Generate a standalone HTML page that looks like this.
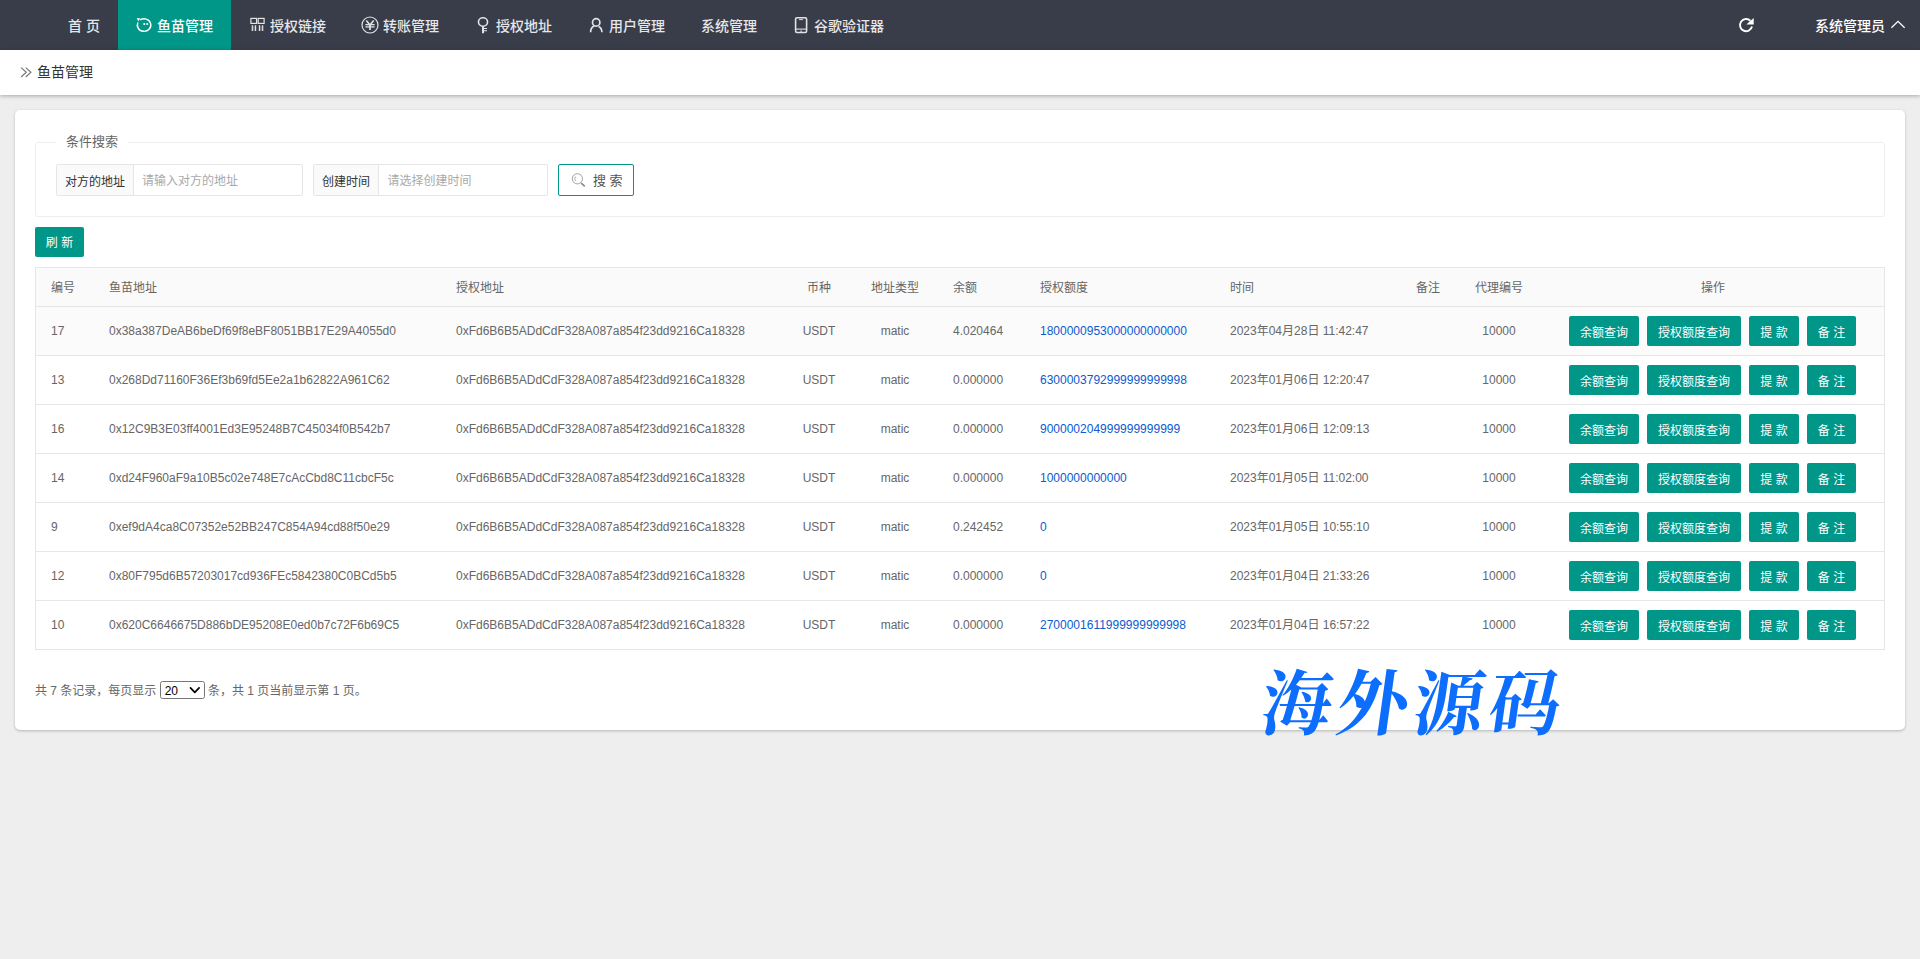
<!DOCTYPE html>
<html lang="zh-CN">
<head>
<meta charset="utf-8">
<title>鱼苗管理</title>
<style>
*{box-sizing:border-box;margin:0;padding:0}
html,body{width:1920px;height:959px;overflow:hidden}
body{background:#eeeeee;font-family:"Liberation Sans","Noto Sans CJK SC",sans-serif;font-size:12px;color:#666;position:relative}
a{text-decoration:none;color:inherit}
ul{list-style:none}
/* header */
.header{position:absolute;left:0;top:0;width:1920px;height:50px;background:#393d49}
.nav{position:absolute;left:0;top:0;height:50px}
.nav li{position:absolute;top:0;height:50px;line-height:50px;font-size:14px;color:#e6e7e9;white-space:nowrap;font-weight:500}
.nav li.on{background:#009688;color:#fff}
.nav li svg{position:absolute}
.nav li span{position:absolute;top:1px}
.hr{position:absolute;top:1px;height:50px;line-height:50px;font-size:14px;color:#fff;white-space:nowrap;font-weight:500}
/* breadcrumb */
.crumb{position:absolute;left:0;top:50px;width:1920px;height:45px;background:#fff;box-shadow:0 1px 4px rgba(0,0,0,.3)}
.crumb span{position:absolute;left:37px;top:0;line-height:44px;font-size:14px;color:#333}
.crumb svg{position:absolute;left:20px;top:16px}
/* card */
.card{position:absolute;left:15px;top:110px;width:1890px;height:620px;background:#fff;border-radius:5px;box-shadow:0 1px 3px rgba(0,0,0,.24)}
.field{position:absolute;left:20px;top:32px;width:1850px;height:75px;border:1px solid #eee;border-radius:3px}
.legend{position:absolute;left:20px;top:-12px;height:22px;line-height:22px;padding:0 10px;background:#fff;font-size:13px;color:#666}
.grp{position:absolute;top:21px;height:32px;border:1px solid #e6e6e6;border-radius:2px;background:#fff}
.grp .lab{position:absolute;left:0;top:0;height:30px;line-height:34px;overflow:hidden;background:#fafafa;border-right:1px solid #e6e6e6;color:#333;font-size:12px;text-align:center}
.grp .ph{position:absolute;top:0;height:30px;line-height:32px;color:#a9a9a9;font-size:12px}
.sbtn{position:absolute;left:522px;top:21px;width:76px;height:32px;border:1px solid #009688;border-radius:2px;background:#fff;color:#555;font-size:13px;line-height:31px}
.sbtn span{position:absolute;left:34px;top:0}
.sbtn svg{position:absolute;left:12px;top:7px}
.rbtn{position:absolute;left:20px;top:117px;width:49px;height:30px;line-height:32px;background:#009688;color:#fff;border-radius:2px;font-size:12px;text-align:center}
/* table */
table{position:absolute;left:20px;top:157px;width:1850px;border-collapse:separate;border-spacing:0;table-layout:fixed;font-size:12px;color:#666;border:1px solid #e6e6e6}
th,td{border-bottom:1px solid #e6e6e6;padding:0 15px;text-align:left;font-weight:normal;white-space:nowrap;overflow:hidden;line-height:20px}
th{height:39px;background:#fafafa;color:#666;padding-top:2px}
td{height:49px}
tr:last-child td{height:48px;border-bottom:0}
tr.odd td{background:#fbfbfb}
.c{text-align:center}
td.lnk{color:#0b5bd0}
td.ops{padding:0 0 0 27px;font-size:0;text-align:left}
.b{display:inline-block;height:30px;line-height:35px;overflow:hidden;background:#009688;color:#fff;font-size:12px;border-radius:2px;text-align:center;vertical-align:middle;margin-left:8px}
.b:first-child{margin-left:0}
.b1{width:70px}.b2{width:94px}.b3{width:50px}.b4{width:49px}
.foot{position:absolute;left:20px;top:570px;height:22px;line-height:22px;font-size:12px;color:#666;white-space:nowrap}
.sel{display:inline-block;position:relative;width:45px;height:18px;border:1px solid #767676;border-radius:2.5px;vertical-align:middle;background:#fff;color:#000;font-size:12px;line-height:16px;margin:0;top:-2px}
.sel i{position:absolute;left:4px;top:1px;font-style:normal}
.sel svg{position:absolute;left:28.6px;top:4px}
.wm{position:absolute;left:1256px;top:665px;font-family:"Liberation Serif","Noto Serif CJK SC",serif;font-weight:700;font-size:71px;line-height:80px;color:#0d6efd;white-space:nowrap;letter-spacing:5px;transform:skewX(-8deg);transform-origin:0 100%}
</style>
</head>
<body>
<div class="header">
  <ul class="nav">
    <li style="left:50px;width:68px"><span style="left:18px">首 页</span></li>
    <li class="on" style="left:118px;width:113px"><span style="left:39px">鱼苗管理</span></li>
    <li style="left:231px;width:113px"><span style="left:39px">授权链接</span></li>
    <li style="left:344px;width:113px"><span style="left:39px">转账管理</span></li>
    <li style="left:457px;width:113px"><span style="left:39px">授权地址</span></li>
    <li style="left:570px;width:113px"><span style="left:39px">用户管理</span></li>
    <li style="left:683px;width:92px"><span style="left:18px">系统管理</span></li>
    <li style="left:775px;width:127px"><span style="left:39px">谷歌验证器</span></li>
  </ul>
  <div class="hr" style="left:1815px">系统管理员</div>
  <svg class="hicons" width="1920" height="50" viewBox="0 0 1920 50" style="position:absolute;left:0;top:0" fill="none" stroke-linecap="butt">
    <!-- fish fry icon -->
    <g stroke="#fff" stroke-width="1.45">
      <path d="M140.2 19.9A6.75 6.3 0 1 1 137.9 22.5"/>
      <path d="M136.7 17.9L140.4 18.5L138.3 21.3Z" fill="#fff" stroke="none"/>
      <circle cx="144.3" cy="24" r="1.1" fill="#fff" stroke="none"/>
      <circle cx="147.25" cy="24" r="1.1" fill="#fff" stroke="none"/>
    </g>
    <!-- link grid icon -->
    <g stroke="#e2e3e5" stroke-width="1.2">
      <rect x="250.9" y="18.4" width="5.7" height="5"/>
      <rect x="258.2" y="18.4" width="5.9" height="5"/>
      <path d="M252.3 25.3V31M255.6 25.3V31M259.4 25.3V31M262.7 25.3V31"/><path d="M252.9 25.6H255V30.7H252.9ZM260 25.6H262.1V30.7H260Z" fill="#e2e3e5" fill-opacity=".3" stroke="none"/>
    </g>
    <!-- rmb icon -->
    <g stroke="#e2e3e5">
      <circle cx="370" cy="25" r="8" stroke-width="1.2"/>
      <path d="M366.3 20.5L370 25L373.7 20.5" stroke-width="1.6"/>
      <path d="M365.4 24.55H374.6M365.4 26.85H374.6" stroke-width="1.2"/>
      <path d="M370 24.6V30" stroke-width="1.7"/>
    </g>
    <!-- key icon -->
    <g stroke="#e2e3e5">
      <ellipse cx="483" cy="22" rx="4.55" ry="4.2" stroke-width="1.6"/>
      <path d="M483 26.2V33.3" stroke-width="2"/>
      <path d="M483.6 28.5H487M483.6 30.7H487" stroke-width="1.1"/>
    </g>
    <!-- user icon -->
    <g stroke="#e2e3e5" stroke-width="1.7">
      <circle cx="596.2" cy="22.4" r="3.7"/>
      <path d="M590.6 32.2C590.6 28.8 592.2 26.8 594.4 25.8M598.6 26.4C600.6 27.4 601.9 29.2 601.9 32.2"/>
    </g>
    <!-- phone icon -->
    <g stroke="#e2e3e5">
      <rect x="795.6" y="17.7" width="11" height="14.8" rx="1.4" stroke-width="1.6"/>
      <path d="M795.6 29.1H806.6" stroke-width="1.1"/>
      <path d="M799 19.6H803" stroke-width="0.9"/>
      <path d="M800.4 31.1H801.8" stroke-width="1.4"/>
    </g>
    <!-- refresh icon -->
    <g>
      <path d="M1750.3 20.7A6.1 6.1 0 1 0 1752 26.6" stroke="#fff" stroke-width="1.9"/>
      <path d="M1753.7 17.9V24.6H1746.3Z" fill="#fff"/>
    </g>
    <!-- chevron up -->
    <path d="M1891.4 27.7L1898 21.4L1904.6 27.7" stroke="#fff" stroke-width="1.3"/>
  </svg>
</div>
<div class="crumb"><svg width="14" height="12" viewBox="0 0 14 12" fill="none" stroke="#7a7a7a" stroke-width="1.2"><path d="M1.1 1.6L6.3 6.3L1.1 11M5.7 1.6L10.9 6.3L5.7 11"/></svg><span>鱼苗管理</span></div>
<div class="card">
  <div class="field">
    <div class="legend">条件搜索</div>
    <div class="grp" style="left:20px;width:247px"><div class="lab" style="width:77px">对方的地址</div><div class="ph" style="left:85px">请输入对方的地址</div></div>
    <div class="grp" style="left:277px;width:235px"><div class="lab" style="width:65px">创建时间</div><div class="ph" style="left:73.5px">请选择创建时间</div></div>
    <div class="sbtn"><svg width="16" height="16" viewBox="0 0 16 16" fill="none" stroke="#8a8a8a"><circle cx="6.4" cy="6.8" r="5.1" stroke-width="0.8"/><path d="M4.6 4.6A3.4 3.4 0 0 0 4.6 9" stroke-width="0.7"/><path d="M10.2 11.2L13.8 14.4" stroke-width="1.6"/></svg><span>搜 索</span></div>
  </div>
  <div class="rbtn">刷 新</div>
  <table>
    <colgroup><col style="width:58px"><col style="width:347px"><col style="width:345px"><col style="width:66px"><col style="width:86px"><col style="width:87px"><col style="width:190px"><col style="width:185px"><col style="width:56px"><col style="width:86px"><col></colgroup>
    <tr><th>编号</th><th>鱼苗地址</th><th>授权地址</th><th class="c">币种</th><th class="c">地址类型</th><th>余额</th><th>授权额度</th><th>时间</th><th class="c">备注</th><th class="c">代理编号</th><th class="c">操作</th></tr>
    <tr class="odd"><td>17</td><td>0x38a387DeAB6beDf69f8eBF8051BB17E29A4055d0</td><td>0xFd6B6B5ADdCdF328A087a854f23dd9216Ca18328</td><td class="c">USDT</td><td class="c">matic</td><td>4.020464</td><td class="lnk">1800000953000000000000</td><td>2023年04月28日 11:42:47</td><td></td><td class="c">10000</td><td class="ops"><a class="b b1">余额查询</a><a class="b b2">授权额度查询</a><a class="b b3">提 款</a><a class="b b4">备 注</a></td></tr>
    <tr><td>13</td><td>0x268Dd71160F36Ef3b69fd5Ee2a1b62822A961C62</td><td>0xFd6B6B5ADdCdF328A087a854f23dd9216Ca18328</td><td class="c">USDT</td><td class="c">matic</td><td>0.000000</td><td class="lnk">6300003792999999999998</td><td>2023年01月06日 12:20:47</td><td></td><td class="c">10000</td><td class="ops"><a class="b b1">余额查询</a><a class="b b2">授权额度查询</a><a class="b b3">提 款</a><a class="b b4">备 注</a></td></tr>
    <tr><td>16</td><td>0x12C9B3E03ff4001Ed3E95248B7C45034f0B542b7</td><td>0xFd6B6B5ADdCdF328A087a854f23dd9216Ca18328</td><td class="c">USDT</td><td class="c">matic</td><td>0.000000</td><td class="lnk">900000204999999999999</td><td>2023年01月06日 12:09:13</td><td></td><td class="c">10000</td><td class="ops"><a class="b b1">余额查询</a><a class="b b2">授权额度查询</a><a class="b b3">提 款</a><a class="b b4">备 注</a></td></tr>
    <tr><td>14</td><td>0xd24F960aF9a10B5c02e748E7cAcCbd8C11cbcF5c</td><td>0xFd6B6B5ADdCdF328A087a854f23dd9216Ca18328</td><td class="c">USDT</td><td class="c">matic</td><td>0.000000</td><td class="lnk">1000000000000</td><td>2023年01月05日 11:02:00</td><td></td><td class="c">10000</td><td class="ops"><a class="b b1">余额查询</a><a class="b b2">授权额度查询</a><a class="b b3">提 款</a><a class="b b4">备 注</a></td></tr>
    <tr><td>9</td><td>0xef9dA4ca8C07352e52BB247C854A94cd88f50e29</td><td>0xFd6B6B5ADdCdF328A087a854f23dd9216Ca18328</td><td class="c">USDT</td><td class="c">matic</td><td>0.242452</td><td class="lnk">0</td><td>2023年01月05日 10:55:10</td><td></td><td class="c">10000</td><td class="ops"><a class="b b1">余额查询</a><a class="b b2">授权额度查询</a><a class="b b3">提 款</a><a class="b b4">备 注</a></td></tr>
    <tr><td>12</td><td>0x80F795d6B57203017cd936FEc5842380C0BCd5b5</td><td>0xFd6B6B5ADdCdF328A087a854f23dd9216Ca18328</td><td class="c">USDT</td><td class="c">matic</td><td>0.000000</td><td class="lnk">0</td><td>2023年01月04日 21:33:26</td><td></td><td class="c">10000</td><td class="ops"><a class="b b1">余额查询</a><a class="b b2">授权额度查询</a><a class="b b3">提 款</a><a class="b b4">备 注</a></td></tr>
    <tr><td>10</td><td>0x620C6646675D886bDE95208E0ed0b7c72F6b69C5</td><td>0xFd6B6B5ADdCdF328A087a854f23dd9216Ca18328</td><td class="c">USDT</td><td class="c">matic</td><td>0.000000</td><td class="lnk">2700001611999999999998</td><td>2023年01月04日 16:57:22</td><td></td><td class="c">10000</td><td class="ops"><a class="b b1">余额查询</a><a class="b b2">授权额度查询</a><a class="b b3">提 款</a><a class="b b4">备 注</a></td></tr>
  </table>
  <div class="foot">共 7 条记录，每页显示 <span class="sel"><i>20</i><svg width="12" height="8" viewBox="0 0 12 8" fill="none" stroke="#000" stroke-width="1.7" stroke-linecap="round" stroke-linejoin="round"><path d="M1.5 1.9L5.8 6.4L10.1 1.9"/></svg></span> 条，共 1 页当前显示第 1 页。</div>
</div>
<div class="wm">海外源码</div>
</body>
</html>
